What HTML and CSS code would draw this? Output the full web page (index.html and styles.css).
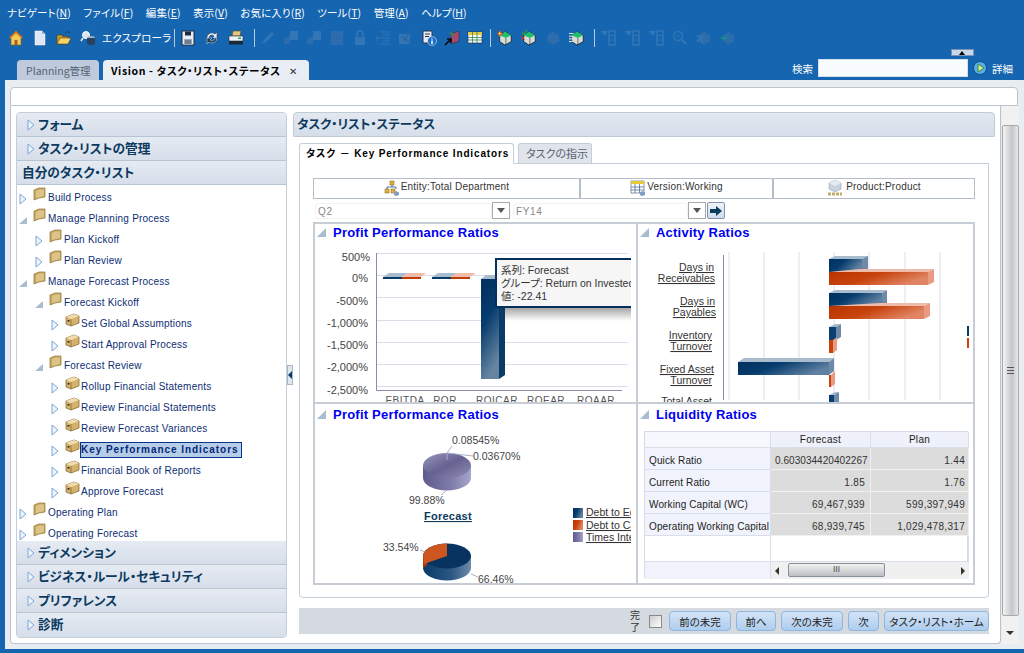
FILE: index.html
```html
<!DOCTYPE html>
<html lang="ja">
<head>
<meta charset="utf-8">
<title>Vision - タスク・リスト・ステータス</title>
<link rel="stylesheet" href="styles.css">
</head>
<body>
<svg class="defs" width="0" height="0" aria-hidden="true">
  <defs>
    <linearGradient id="gBlue" x1="0" y1="0" x2=".3" y2="1"><stop offset="0" stop-color="#00305e"/><stop offset=".45" stop-color="#063c6e"/><stop offset="1" stop-color="#64849f"/></linearGradient>
    <linearGradient id="gBlueH" x1="0" y1="0" x2="1" y2=".4"><stop offset="0" stop-color="#00305e"/><stop offset=".45" stop-color="#063c6e"/><stop offset="1" stop-color="#5f80a0"/></linearGradient>
    <linearGradient id="gRed" x1="0" y1="0" x2="1" y2=".4"><stop offset="0" stop-color="#b83400"/><stop offset=".5" stop-color="#c8440e"/><stop offset="1" stop-color="#e08464"/></linearGradient>
    <linearGradient id="gPie" x1="0" y1="0" x2="1" y2="1"><stop offset="0" stop-color="#9a98c4"/><stop offset=".5" stop-color="#66628f"/><stop offset="1" stop-color="#8f8db8"/></linearGradient>
    <linearGradient id="gPieS" x1="0" y1="0" x2="1" y2="0"><stop offset="0" stop-color="#5e5a8a"/><stop offset=".6" stop-color="#807eaa"/><stop offset="1" stop-color="#a8a6cc"/></linearGradient>
    <linearGradient id="gPieB" x1="0" y1="0" x2="1" y2="0"><stop offset="0" stop-color="#0a3a6a"/><stop offset=".6" stop-color="#2d5885"/><stop offset="1" stop-color="#6f8cab"/></linearGradient>
    <linearGradient id="gShade" x1="0" y1="0" x2="0" y2="1"><stop offset="0" stop-color="#a0a0a0"/><stop offset="1" stop-color="#fff"/></linearGradient>
    <symbol id="i-folder" viewBox="0 0 13 14"><path d="M1 3 L6 1 L12 1 L12 10 L6 11 L1 13Z" fill="#c9a860" stroke="#8f7434" stroke-width=".7"/><path d="M3 4 L7 2.5 L11 2.5 L11 9 L3 11Z" fill="#dcc488"/></symbol>
    <symbol id="i-box" viewBox="0 0 15 14"><path d="M1 4 L9 1 L14 3 L14 10 L6 13 L1 11Z" fill="#d4b26c" stroke="#7c6228" stroke-width=".7"/><path d="M1 4 L6 6 L14 3 L9 1Z" fill="#f0dcae"/><path d="M6 6 V13" stroke="#7c6228" stroke-width=".7"/><rect x="2.5" y="7" width="2" height="1.6" fill="#3a2c10"/></symbol>
    <symbol id="i-right" viewBox="0 0 8 12"><path d="M1 1 L7 6 L1 11Z" fill="#eef4fb" stroke="#7ba6d6"/></symbol>
    <symbol id="i-down" viewBox="0 0 8 12"><path d="M8 3 V10 H0Z" fill="#a9bcd2"/></symbol>
    <symbol id="i-cube" viewBox="0 0 18 18"><path d="M9 2 L16 6 L16 13 L9 17 L3 13 L3 6Z" fill="#d8dcd8" stroke="#111" stroke-width=".8"/><path d="M9 2 L16 6 L10 9 L3 6Z" fill="#1fbf6a"/><path d="M10 9 V17" stroke="#111" stroke-width=".6"/></symbol>
    <symbol id="i-dis" viewBox="0 0 16 16"><rect x="7" y="1" width="8" height="9" fill="#3276b6"/><path d="M1 9 L7 6 V14 H1Z" fill="#2d6dae"/></symbol>
    <symbol id="i-disv" viewBox="0 0 16 16"><path d="M1 1 H8 L4.500 6Z" fill="#3276b6"/><rect x="9" y="1" width="6" height="14" fill="none" stroke="#3276b6" stroke-width="1.500"/><path d="M9 5.500 H15 M9 10 H15" stroke="#3276b6"/></symbol>
  </defs>
</svg>

<div class="app">
  <nav class="menu">
    <span>ナビゲート(<u>N</u>)</span><span>ファイル(<u>F</u>)</span><span>編集(<u>E</u>)</span><span>表示(<u>V</u>)</span><span>お気に入り(<u>R</u>)</span><span>ツール(<u>T</u>)</span><span>管理(<u>A</u>)</span><span>ヘルプ(<u>H</u>)</span>
  </nav>

  <div class="toolbar">
    <svg class="tool" viewBox="0 0 16 16"><path d="M8 1 L15 8 H13 V15 H3 V8 H1Z" fill="#f2c85a" stroke="#8a5a10" stroke-width=".6"/><path d="M8 1 L15 8 L13 8 L8 3.500 L3 8 L1 8Z" fill="#e07818"/><rect x="6.500" y="10" width="3" height="5" fill="#a4661c"/></svg>
    <svg class="tool" viewBox="0 0 16 16"><path d="M3 1 H10 L13 4 V15 H3Z" fill="#dfe5f5" stroke="#fff" stroke-width=".5"/><path d="M10 1 V4 H13Z" fill="#9aa8c8"/></svg>
    <svg class="tool" viewBox="0 0 16 16"><path d="M1 5 H6 L7 6.500 H12 V14 H1Z" fill="#c99a2c" stroke="#5c3f08" stroke-width=".6"/><path d="M1 14 L4 8 H15 L12 14Z" fill="#f6d469" stroke="#5c3f08" stroke-width=".6"/><path d="M9 3 Q12 0 14 3" fill="none" stroke="#20406a"/></svg>
    <svg class="tool" viewBox="0 0 16 16"><circle cx="6" cy="5" r="3.500" fill="#d9e4f2" stroke="#f4f8fc"/><path d="M3 8 L1 11" stroke="#eee" stroke-width="1.500"/><ellipse cx="11" cy="8" rx="4" ry="2" fill="#9fb1c4"/><path d="M7 8 V13 A4 2 0 0 0 15 13 V8Z" fill="#26425e"/></svg>
    <span class="toollabel">エクスプローラ</span>
    <i class="sep"></i>
    <svg class="tool" viewBox="0 0 16 16"><path d="M2 1 H14 V15 H2Z" fill="#e8edf5" stroke="#1d2b3d"/><rect x="5" y="1.500" width="6" height="4" fill="#1d2b3d"/><rect x="4" y="9" width="8" height="6" fill="#9aa9bb"/><path d="M5 11 H11 M5 13 H11" stroke="#1d2b3d" stroke-width=".7"/></svg>
    <svg class="tool" viewBox="0 0 16 16"><path d="M3 9 A5 5 0 0 1 11 4 L13 2 V8 H8 L10 6 A3 3 0 0 0 5 9Z" fill="#e6edf5" stroke="#1d2b3d" stroke-width=".5"/><path d="M13 8 A5 5 0 0 1 5 12 L3 14 V8 H8 L6 10 A3 3 0 0 0 11 8Z" fill="#24384f" stroke="#dfe6ee" stroke-width=".5"/></svg>
    <svg class="tool" viewBox="0 0 16 16"><path d="M5 1 H13 L12 6 H4Z" fill="#e6c77c" stroke="#5c4a20" stroke-width=".6"/><rect x="1" y="6" width="14" height="5" fill="#eef2f6" stroke="#20303f" stroke-width=".6"/><rect x="1" y="11" width="14" height="3.500" fill="#18283a"/><rect x="10" y="7.500" width="3" height="1.500" fill="#2aa850"/></svg>
    <i class="sep wide"></i>
    <svg class="tool t23" viewBox="0 0 16 16"><path d="M2 14 L4 10 L12 2 L14 4 L6 12Z" fill="#3276b6"/></svg>
    <svg class="tool t23"><use href="#i-dis"/></svg>
    <svg class="tool t23"><use href="#i-dis"/></svg>
    <svg class="tool t23" viewBox="0 0 16 16"><rect x="2" y="1" width="12" height="14" fill="#2d6dae"/><path d="M4 6 H12 M4 9 H12" stroke="#2a66a6"/></svg>
    <svg class="tool t23" viewBox="0 0 16 16"><rect x="3" y="7" width="10" height="8" fill="#3276b6"/><path d="M5 7 V4 A3 3 0 0 1 11 4 V7" fill="none" stroke="#3276b6" stroke-width="1.500"/></svg>
    <svg class="tool t23" viewBox="0 0 16 16"><path d="M5 2 H15 M8 5 H15 M5 8 H15 M8 11 H15 M5 14 H15" stroke="#3276b6"/><path d="M1 5 L5 8 L1 11Z" fill="#2d6dae"/></svg>
    <svg class="tool t23" viewBox="0 0 16 16"><rect x="1" y="4" width="11" height="10" fill="#3276b6"/><path d="M3 6 L13 13 M13 1 L5 11" stroke="#2a66a6" stroke-width="1.500"/></svg>
    <svg class="tool t23" viewBox="0 0 16 16"><path d="M2 1 H11 V13 H2Z" fill="#e6eaf5" stroke="#26324a"/><path d="M4 4 H9 M4 6.500 H8" stroke="#26324a"/><circle cx="11" cy="11" r="4.500" fill="#1a6ec8" stroke="#fff" stroke-width=".5"/><path d="M11 8.500 V9.500 M11 10.500 V14" stroke="#fff" stroke-width="1.500"/></svg>
    <svg class="tool t23" viewBox="0 0 16 16"><path d="M7 4 L15 1 V11 L7 14Z" fill="#a04a6c" stroke="#401828" stroke-width=".5"/><path d="M6 2 L11 4 L7 6Z" fill="#3d8a3c"/><path d="M1 15 L7 9 M3 9 H7 V13" fill="none" stroke="#0a0a0a" stroke-width="1.600"/></svg>
    <svg class="tool t23" viewBox="0 0 16 16"><rect x="1" y="2" width="14" height="11" fill="#f2f4f8" stroke="#1f2d40" stroke-width=".6"/><rect x="1" y="2" width="14" height="3" fill="#e4c84a"/><path d="M1 7.500 H15 M1 10 H15 M5.500 2 V13 M10 2 V13" stroke="#2a7a40" stroke-width=".7"/></svg>
    <i class="sep tight"></i>
    <svg class="tool" viewBox="0 0 18 18"><use href="#i-cube" width="18" height="18"/><path d="M3 0 L4 3 L7 4 L4 5 L3 8 L2 5 L0 4 L2 3Z" fill="#ffd23c" stroke="#c8281c" stroke-width=".7"/></svg>
    <svg class="tool" viewBox="0 0 18 18"><use href="#i-cube" width="18" height="18"/><path d="M1 3 L3 5 L7 0" fill="none" stroke="#2ca83c" stroke-width="1.200"/><path d="M0 7 L4 11 M4 7 L0 11" stroke="#e0301c"/></svg>
    <svg class="tool" viewBox="0 0 18 18"><path d="M9 2 L16 6 V13 L9 17 L3 13 V6Z" fill="#2d6dae"/></svg>
    <svg class="tool" viewBox="0 0 18 18"><use href="#i-cube" width="18" height="18"/><path d="M0 4 H5 M0 7 H4 M0 10 H4 M0 13 H4" stroke="#fff"/></svg>
    <i class="sep sep2"></i>
    <svg class="tool"><use href="#i-disv"/></svg>
    <svg class="tool"><use href="#i-disv"/></svg>
    <svg class="tool"><use href="#i-disv"/></svg>
    <svg class="tool" viewBox="0 0 16 16"><circle cx="6" cy="6" r="4.500" fill="none" stroke="#3276b6" stroke-width="1.500"/><path d="M9 9 L14 14" stroke="#3276b6" stroke-width="2"/><path d="M4 6 H8" stroke="#3276b6"/></svg>
    <svg class="tool" viewBox="0 0 18 18"><path d="M9 2 L16 6 V13 L9 17 L3 13 V6Z" fill="#2d6dae"/><path d="M1 6 L8 13 M8 6 L1 13" stroke="#3276b6" stroke-width="2"/></svg>
    <svg class="tool" viewBox="0 0 18 18"><path d="M9 2 L16 6 V13 L9 17 L5 13 V6Z" fill="#2d6dae"/><path d="M1 9 H8 M4.500 6 V12" stroke="#1f8a8a" stroke-width="2"/></svg>
  </div>

  <div class="tabrow">
    <div class="doc-tab off">Planning管理</div>
    <div class="doc-tab on">Vision - タスク・リスト・ステータス<span class="close">✕</span></div>
    <div class="search">
      <button class="collapse" aria-label="折りたたむ"></button>
      <span>検索</span>
      <input class="search-input" type="text" aria-label="検索">
      <svg class="go" viewBox="0 0 14 14"><circle cx="7" cy="7" r="6.500" fill="#58b0ea" stroke="#0c4a8c"/><path d="M5 3 L11 7 L5 11Z" fill="#d6ec9c" stroke="#3f8a2a"/></svg>
      <span>詳細</span>
    </div>
  </div>

  <div class="content">
    <div class="topbox"></div>
    <div class="workrow">
      <div class="mainbox">
        <aside class="left">
          <div class="acc"><svg class="acc-arrow"><use href="#i-right"/></svg>フォーム</div>
          <div class="acc"><svg class="acc-arrow"><use href="#i-right"/></svg>タスク・リストの管理</div>
          <div class="acc open">自分のタスク・リスト</div>
          <div class="tree">
            <div class="row l0"><svg class="tw"><use href="#i-right"/></svg><svg class="fo"><use href="#i-folder"/></svg><span>Build Process</span></div>
            <div class="row l0"><svg class="tw"><use href="#i-down"/></svg><svg class="fo"><use href="#i-folder"/></svg><span>Manage Planning Process</span></div>
            <div class="row l1"><svg class="tw"><use href="#i-right"/></svg><svg class="fo"><use href="#i-folder"/></svg><span>Plan Kickoff</span></div>
            <div class="row l1"><svg class="tw"><use href="#i-right"/></svg><svg class="fo"><use href="#i-folder"/></svg><span>Plan Review</span></div>
            <div class="row l0"><svg class="tw"><use href="#i-down"/></svg><svg class="fo"><use href="#i-folder"/></svg><span>Manage Forecast Process</span></div>
            <div class="row l1"><svg class="tw"><use href="#i-down"/></svg><svg class="fo"><use href="#i-folder"/></svg><span>Forecast Kickoff</span></div>
            <div class="row l2"><svg class="tw"><use href="#i-right"/></svg><svg class="bx"><use href="#i-box"/></svg><span>Set Global Assumptions</span></div>
            <div class="row l2"><svg class="tw"><use href="#i-right"/></svg><svg class="bx"><use href="#i-box"/></svg><span>Start Approval Process</span></div>
            <div class="row l1"><svg class="tw"><use href="#i-down"/></svg><svg class="fo"><use href="#i-folder"/></svg><span>Forecast Review</span></div>
            <div class="row l2"><svg class="tw"><use href="#i-right"/></svg><svg class="bx"><use href="#i-box"/></svg><span>Rollup Financial Statements</span></div>
            <div class="row l2"><svg class="tw"><use href="#i-right"/></svg><svg class="bx"><use href="#i-box"/></svg><span>Review Financial Statements</span></div>
            <div class="row l2"><svg class="tw"><use href="#i-right"/></svg><svg class="bx"><use href="#i-box"/></svg><span>Review Forecast Variances</span></div>
            <div class="row l2"><svg class="tw"><use href="#i-right"/></svg><svg class="bx"><use href="#i-box"/></svg><span class="sel">Key Performance Indicators</span></div>
            <div class="row l2"><svg class="tw"><use href="#i-right"/></svg><svg class="bx"><use href="#i-box"/></svg><span>Financial Book of Reports</span></div>
            <div class="row l2"><svg class="tw"><use href="#i-right"/></svg><svg class="bx"><use href="#i-box"/></svg><span>Approve Forecast</span></div>
            <div class="row l0"><svg class="tw"><use href="#i-right"/></svg><svg class="fo"><use href="#i-folder"/></svg><span>Operating Plan</span></div>
            <div class="row l0"><svg class="tw"><use href="#i-right"/></svg><svg class="fo"><use href="#i-folder"/></svg><span>Operating Forecast</span></div>
          </div>
          <div class="acc"><svg class="acc-arrow"><use href="#i-right"/></svg>ディメンション</div>
          <div class="acc"><svg class="acc-arrow"><use href="#i-right"/></svg>ビジネス・ルール・セキュリティ</div>
          <div class="acc"><svg class="acc-arrow"><use href="#i-right"/></svg>プリファレンス</div>
          <div class="acc"><svg class="acc-arrow"><use href="#i-right"/></svg>診断</div>
        </aside>

        <div class="splitter"><i class="grip"></i></div>

        <section class="right">
          <div class="right-head">タスク・リスト・ステータス</div>
          <div class="subtabs">
            <div class="subtab on">タスク － Key Performance Indicators</div>
            <div class="subtab off">タスクの指示</div>
          </div>
          <div class="tabbody">
            <div class="pov">
              <div class="pov-cell c1">
                <svg class="pov-i" viewBox="0 0 16 16"><rect x="6" y="1" width="4" height="4" fill="#e0b040" stroke="#806010" stroke-width=".5"/><rect x="1" y="9" width="4" height="4" fill="#e0b040" stroke="#806010" stroke-width=".5"/><rect x="7" y="9" width="4" height="4" fill="#e0b040" stroke="#806010" stroke-width=".5"/><path d="M8 5 V7 M3 9 V7 H12 V9" fill="none" stroke="#305080" stroke-width=".8"/><path d="M12 11 L15 12.500 V15 L12 16 L10 15 V12.500Z" fill="#7f9cc4"/></svg>
                Entity:Total Department</div>
              <div class="pov-cell c2">
                <svg class="pov-i" viewBox="0 0 16 16"><rect x="1" y="1" width="13" height="12" fill="#fff" stroke="#45566e" stroke-width=".6"/><rect x="1" y="1" width="13" height="3" fill="#e6c83c"/><path d="M1 7 H14 M1 10 H14 M5 4 V13 M9.500 4 V13" stroke="#3c5c90" stroke-width=".7"/><path d="M12 11 L15 12.500 V15 L12 16 L10 15 V12.500Z" fill="#7f9cc4"/></svg>
                Version:Working</div>
              <div class="pov-cell c3">
                <svg class="pov-i tall" viewBox="0 0 16 18"><path d="M8 1 L14 4 V10 L8 13 L2 10 V4Z" fill="#c8d2dc" stroke="#8a98a8" stroke-width=".5"/><path d="M8 1 L14 4 L8 7 L2 4Z" fill="#e4eaf0"/><path d="M1 15 H15" stroke="#c2ac6c" stroke-width="3" stroke-dasharray="3 1"/></svg>
                Product:Product</div>
            </div>
            <div class="selectors">
              <div class="fake-input w1">Q2</div><button class="drop" aria-label="開く"></button>
              <div class="fake-input w2">FY14</div><button class="drop" aria-label="開く"></button>
              <button class="arrowbtn" aria-label="移動">
                <svg viewBox="0 0 12 10" width="12" height="10"><path d="M0 3 H6 V0 L12 5 L6 10 V7 H0Z" fill="#0a3c5a"/></svg>
              </button>
            </div>

            <div class="dash">
              <div class="panel">
                <h3 class="p-title"><i class="corner"></i>Profit Performance Ratios</h3>
                <svg class="chart" width="316" height="159" viewBox="315 243 316 159">
                  <g class="grid"><path d="M377 253.500 H628 M377 275.500 H628 M377 297.500 H628 M377 320.500 H628 M377 342.500 H628 M377 364.500 H628 M377 386.500 H628"/></g>
                  <path class="axis" d="M376.500 253 V390.500 H622"/>
                  <g class="ax" text-anchor="end">
                    <text x="370" y="261">500%</text><text x="368" y="282">0%</text><text x="368" y="305">-500%</text><text x="368" y="327">-1,000%</text><text x="368" y="349">-1,500%</text><text x="368" y="371">-2,000%</text><text x="368" y="394">-2,500%</text>
                  </g>
                  <path d="M383 277 L389 273 H408 L402 277Z" fill="#a9bccd"/><rect x="383" y="277" width="19" height="2" fill="#063a6c"/>
                  <path d="M402 277 L408 273 H426 L421 277Z" fill="#eebcaa"/><rect x="402" y="277" width="19" height="2" fill="#c23c08"/>
                  <path d="M432 277 L438 273 H457 L451 277Z" fill="#a9bccd"/><rect x="432" y="277" width="19" height="2" fill="#063a6c"/>
                  <path d="M451 277 L457 273 H476 L470 277Z" fill="#eebcaa"/><rect x="451" y="277" width="19" height="2" fill="#c23c08"/>
                  <path d="M481 279 L486 275 H505 L499 279Z" fill="#a9bccd"/>
                  <rect x="481" y="279" width="18" height="100" fill="url(#gBlue)"/>
                  <path d="M499 279 L505 275 V375 L499 379Z" fill="#0a3a68"/>
                  <g class="xl"><text x="405" y="404" text-anchor="middle">EBITDA</text><text x="445" y="404" text-anchor="middle">ROR</text><text x="497" y="404" text-anchor="middle">ROICAR</text><text x="546" y="404" text-anchor="middle">ROEAR</text><text x="596" y="404" text-anchor="middle">ROAAR</text></g>
                  <rect x="505" y="307" width="126" height="14" fill="url(#gShade)"/>
                  <rect x="496" y="259" width="140" height="48" fill="#f6f6f6" stroke="#04305c" stroke-width="2"/>
                  <g class="tip"><text x="501" y="274">系列: Forecast</text><text x="501" y="287">グループ: Return on Invested Capital</text><text x="501" y="300">値: -22.41</text></g>
                </svg>
              </div>

              <div class="panel">
                <h3 class="p-title"><i class="corner"></i>Activity Ratios</h3>
                <svg class="chart" width="335" height="159" viewBox="638 243 335 159">
                  <g class="grid"><path d="M729 252 V400 M764 252 V400 M799 252 V400 M834 252 V400 M869 252 V400 M905 252 V400 M940 252 V400"/></g>
                  <path class="axis" d="M723.500 255 V400"/>
                  <g class="lab" text-anchor="end">
                    <text x="714" y="271">Days in</text><text x="715" y="282">Receivables</text>
                    <text x="715" y="305">Days in</text><text x="716" y="316">Payables</text>
                    <text x="712" y="339">Inventory</text><text x="712" y="350">Turnover</text>
                    <text x="714" y="373">Fixed Asset</text><text x="712" y="384">Turnover</text>
                    <text x="712" y="405">Total Asset</text>
                  </g>
                  <path d="M829 259 L835 256 H868 L862 259Z" fill="#a9bccd"/><rect x="829" y="259" width="33" height="13" fill="url(#gBlueH)"/><path d="M862 259 L868 256 V269 L862 272Z" fill="#6d8aa8"/>
                  <path d="M829 272 L860 269 H934 L928 272Z" fill="#eebcaa"/><rect x="829" y="272" width="99" height="13" fill="url(#gRed)"/><path d="M928 272 L934 269 V282 L928 285Z" fill="#ea9a80"/>
                  <path d="M829 293 L835 290 H887 L882 293Z" fill="#a9bccd"/><rect x="829" y="293" width="53" height="13" fill="url(#gBlueH)"/><path d="M882 293 L887 290 V303 L882 306Z" fill="#6d8aa8"/>
                  <path d="M829 306 L880 303 H930 L924 306Z" fill="#eebcaa"/><rect x="829" y="306" width="95" height="13" fill="url(#gRed)"/><path d="M924 306 L930 303 V316 L924 319Z" fill="#ea9a80"/>
                  <path d="M829 327 L835 324 H841 L836 327Z" fill="#a9bccd"/><rect x="829" y="327" width="7" height="13" fill="#0c3f70"/><path d="M836 327 L841 324 V337 L836 340Z" fill="#6d8aa8"/>
                  <rect x="829" y="340" width="4" height="13" fill="#c8440e"/><path d="M833 340 L837 337 V350 L833 353Z" fill="#ea9a80"/>
                  <path d="M738 362 L744 358 H834 L829 362Z" fill="#a9bccd"/><rect x="738" y="362" width="91" height="13" fill="url(#gBlueH)"/><path d="M829 362 L834 358 V371 L829 375Z" fill="#6d8aa8"/>
                  <rect x="829" y="375" width="2" height="12" fill="#c8440e"/><path d="M831 375 L835 371 V384 L831 387Z" fill="#ea9a80"/>
                  <path d="M829 395 L835 392 H839 L834 395Z" fill="#a9bccd"/><rect x="829" y="395" width="5" height="8" fill="#0c3f70"/><path d="M834 395 L839 392 V402 H834Z" fill="#6d8aa8"/>
                  <rect x="967" y="326" width="2" height="10" fill="#0a3a6a"/><rect x="967" y="338" width="2" height="10" fill="#c8440e"/>
                </svg>
              </div>

              <div class="panel">
                <h3 class="p-title low"><i class="corner"></i>Profit Performance Ratios</h3>
                <svg class="chart" width="316" height="160" viewBox="315 423 316 160">
                  <path d="M423 466 V478 A24 12.500 0 0 0 471 478 V466Z" fill="url(#gPieS)"/>
                  <ellipse cx="447" cy="465.500" rx="24" ry="12.500" fill="url(#gPie)"/>
                  <path d="M447 460 V453 L452 446 M447 453 L473 456 M447 490 L441 495" fill="none" stroke="#aab0c8"/>
                  <g class="ax2"><text x="452" y="444">0.08545%</text><text x="473" y="460">0.03670%</text><text x="409" y="504">99.88%</text><text x="383" y="551">33.54%</text><text x="478" y="583">66.46%</text></g>
                  <text class="fc" x="424" y="520">Forecast</text>
                  <path d="M423 556 V568 A24 12.500 0 0 0 471 568 V556Z" fill="url(#gPieB)"/>
                  <path d="M423 556 V568 L427 565 V553Z" fill="#b03808"/>
                  <ellipse cx="447" cy="556" rx="24" ry="12.500" fill="#06335f"/>
                  <path d="M447 556 V543.500 A24 12.500 0 0 0 423 556 L424 564Z" fill="#cc5520"/>
                  <path d="M420 550 L425 552 M471 574 L478 577" stroke="#aab0c8"/>
                  <rect x="573" y="508" width="10" height="10" fill="url(#gBlueH)"/><rect x="573" y="520" width="10" height="10" fill="url(#gRed)"/><rect x="573" y="532" width="10" height="10" fill="url(#gPieS)"/>
                  <g class="lab"><text x="586" y="516">Debt to Equity</text><text x="586" y="529">Debt to Capital</text><text x="586" y="541">Times Interest Earned</text></g>
                </svg>
              </div>

              <div class="panel">
                <h3 class="p-title low"><i class="corner"></i>Liquidity Ratios</h3>
                <div class="grid-table">
                  <div class="th blank"></div><div class="th">Forecast</div><div class="th">Plan</div>
                  <div class="rh">Quick Ratio</div><div class="td long">0.603034420402267</div><div class="td">1.44</div>
                  <div class="rh">Current Ratio</div><div class="td">1.85</div><div class="td">1.76</div>
                  <div class="rh">Working Capital (WC)</div><div class="td">69,467,939</div><div class="td">599,397,949</div>
                  <div class="rh">Operating Working Capital</div><div class="td">68,939,745</div><div class="td">1,029,478,317</div>
                  <div class="empty"></div><div class="empty wide"></div>
                  <div class="sb-corner"></div>
                  <div class="hscroll"><i class="ha l"></i><i class="thumb">Ⅲ</i><i class="ha r"></i></div>
                </div>
              </div>
            </div>
          </div>

          <div class="footbar">
            <span class="done">完<br>了</span><i class="check"></i>
            <button class="btn">前の未完</button><button class="btn">前へ</button><button class="btn">次の未完</button><button class="btn">次</button><button class="btn">タスク・リスト・ホーム</button>
          </div>
        </section>
      </div>
      <div class="vscroll"><i class="va up"></i><i class="vthumb"><b></b></i><i class="va dn"></i></div>
    </div>
  </div>
</div>
</body>
</html>
```

FILE: styles.css
```css
* { box-sizing: border-box; }
html, body { margin: 0; height: 653px; overflow: hidden; }
body { background: #1565b0; font-family: "Liberation Sans", "Noto Sans CJK JP", sans-serif; font-size: 11px; }
.defs { position: absolute; }
.app { height: 653px; display: flex; flex-direction: column; font-feature-settings: "palt"; }

.menu { height: 24px; flex: none; display: flex; gap: 12.400px; align-items: center; padding-left: 7px; color: #fff; font: 10.500px "Noto Sans CJK JP", sans-serif; font-feature-settings: "palt"; letter-spacing: .12px; }

.toolbar { height: 26px; flex: none; display: flex; align-items: center; padding: 1px 0 0 8px; }
.tool { width: 16px; height: 16px; margin-right: 8px; flex: none; overflow: visible; }
.tool.t23 { margin-right: 7px; }
.toollabel { color: #fff; font: 10.500px "Noto Sans CJK JP", sans-serif; font-feature-settings: "palt"; margin-left: -2px; width: 72px; white-space: nowrap; letter-spacing: .2px; }
.sep { width: 1px; height: 18px; background: #b6c8dc; margin: 0 5px 0 0; flex: none; }
.sep.wide { margin: 0 5px 0 2px; }
.sep.tight { margin: 0 6px 0 0; }
.sep.sep2 { margin: 0 5px 0 1px; }

.tabrow { height: 30px; flex: none; display: flex; align-items: flex-end; padding-left: 17px; gap: 4px; position: relative; }
.doc-tab { height: 20px; border-radius: 4px 4px 0 0; display: flex; align-items: center; font: 10.500px "Noto Sans CJK JP", "Liberation Sans", sans-serif; font-feature-settings: "palt"; }
.doc-tab.off { width: 82px; background: #bfcbdc; color: #556270; padding-left: 9px; }
.doc-tab.on { width: 206px; background: #e9eef4; color: #000; font-weight: 700; padding-left: 8px; white-space: nowrap; letter-spacing: .62px; }
.close { font-weight: 400; margin-left: 8px; font-size: 10px; color: #333; }
.search { margin-left: auto; display: flex; align-items: center; gap: 5px; height: 18px; margin-bottom: 3px; padding-right: 11px; color: #fff; font: 10.500px "Noto Sans CJK JP", sans-serif; }
.search-input { width: 150px; height: 18px; border: 1px solid #d5e0ec; background: #f8fcff; padding: 0; }
.go { width: 14px; height: 14px; }
.collapse { position: absolute; right: 50px; top: -1px; width: 23px; height: 7px; padding: 0; border: 1px solid #7a93b8; background: #c9d7ea; }
.collapse::after { content: ""; position: absolute; left: 7px; top: 1px; border: 3.500px solid transparent; border-top: 0; border-bottom: 4px solid #000; }

.content { flex: 1; min-height: 0; margin: 0 0 4px 5px; background: #e8edf2; padding: 7px 6px 5px 5px; display: flex; flex-direction: column; }
.topbox { height: 19px; flex: none; background: #fff; border: 1px solid #b9c4cf; border-radius: 4px 4px 0 0; }
.workrow { flex: 1; display: flex; gap: 1px; min-height: 0; }
.mainbox { width: 991px; display: flex; background: #fff; border: 1px solid #b9c4cf; border-top-width: 0; border-radius: 0 0 4px 4px; padding: 6px 5px 5px; }

.left { width: 271px; flex: none; display: flex; flex-direction: column; border: 1px solid #c4ced9; border-radius: 4px; overflow: hidden; }
.acc { height: 24px; flex: none; display: flex; align-items: center; padding: 0 0 3px 10px; background: linear-gradient(#e6ebf3, #d6deea); border-bottom: 1px solid #b8c4d2; color: #0b3a5e; font: 700 12.700px "Noto Sans CJK JP", sans-serif; font-feature-settings: "palt"; }
.acc:last-child { border-bottom: 0; }
.acc.open { padding-left: 5px; }
.acc-arrow { width: 8px; height: 12px; margin: 3px 3px 0 0; }
.tree { height: 356px; overflow: hidden; padding-top: 2px; }
.row { height: 21px; display: flex; align-items: flex-start; color: #0d2d73; font-size: 10px; letter-spacing: .22px; white-space: nowrap; }
.row span { margin-top: 5px; line-height: 12px; }
.row.l0 { padding-left: 2px; }
.row.l1 { padding-left: 18px; }
.row.l2 { padding-left: 34px; }
.tw { width: 8px; height: 12px; margin: 6px 6px 0 0; flex: none; }
.fo { width: 13px; height: 14px; margin-right: 2px; flex: none; }
.bx { width: 15px; height: 14px; margin-right: 1px; flex: none; }
.row span.sel { margin-top: 3px; margin-left: -1px; padding: 1px 2px 0 0; height: 16px; background: #b7cce6; border: 1px solid #06348a; font-weight: 700; color: #00297a; letter-spacing: .95px; }

.splitter { width: 6px; flex: none; position: relative; }
.grip { position: absolute; left: 0; top: 253px; width: 6px; height: 20px; background: #dfe6ee; border: 1px solid #a8b6c6; }
.grip::after { content: ""; position: absolute; left: 0; top: 5px; border: 4px solid transparent; border-left: 0; border-right: 4px solid #0b3a6a; }

.right { width: 702px; flex: none; display: flex; flex-direction: column; }
.right-head { height: 25px; flex: none; display: flex; align-items: center; padding: 0 0 3px 3px; background: linear-gradient(#e2e8f0, #d6deea); border: 1px solid #c0cad6; border-radius: 4px 4px 0 0; color: #0b3a5e; font: 700 12.500px "Noto Sans CJK JP", sans-serif; font-feature-settings: "palt"; }
.subtabs { height: 26px; flex: none; display: flex; gap: 4px; align-items: flex-end; padding-left: 6px; }
.subtab { height: 20px; display: flex; align-items: center; border: 1px solid #c4ced9; border-radius: 3px 3px 0 0; font-feature-settings: "palt"; font-family: "Liberation Sans", "Noto Sans CJK JP", sans-serif; font-size: 10px; }
.subtab.on { width: 215px; background: #fff; border-bottom-color: #fff; padding: 0 0 3px 6px; font-weight: 700; color: #000; letter-spacing: .85px; position: relative; z-index: 1; margin-bottom: -1px; height: 21px; white-space: nowrap; }
.subtab.off { width: 74px; background: #e0e5ec; color: #58626e; padding: 0 0 2px 7px; border-bottom: 0; font-size: 11px; }
.tabbody { width: 690px; height: 435px; margin-left: 6px; flex: none; border: 1px solid #c4ced9; border-radius: 0 0 4px 4px; padding: 14px 13px 0; }
.pov { height: 21px; display: flex; border: 1px solid #b4bec8; width: 662px; }
.pov-cell { display: flex; align-items: center; justify-content: center; gap: 1px; padding-bottom: 5px; font-size: 10px; letter-spacing: .2px; color: #333; white-space: nowrap; }
.pov-cell.c1 { width: 267px; border-right: 2px solid #b4bec8; }
.pov-cell.c2 { width: 193px; border-right: 2px solid #b4bec8; }
.pov-cell.c3 { flex: 1; gap: 3px; }
.pov-i { width: 16px; height: 16px; margin-bottom: -4px; }
.pov-i.tall { height: 18px; }
.selectors { height: 23px; display: flex; align-items: center; gap: 0; padding-left: 2px; }
.fake-input { height: 16px; color: #888; font-size: 10px; letter-spacing: .6px; line-height: 15px; padding-left: 2px; border: 1px solid #f2f2f2; border-radius: 3px; background: #fff; }
.fake-input.w1 { width: 177px; }
.fake-input.w2 { width: 175px; margin-left: 3px; }
.drop { width: 18px; height: 17px; border: 1px solid #a9a9a9; background: #fff; padding: 0; position: relative; }
.drop::after { content: ""; position: absolute; left: 4px; top: 5px; border: 4px solid transparent; border-bottom: 0; border-top: 5px solid #555; }
.arrowbtn { width: 18px; height: 17px; margin-left: 1px; padding: 0; border: 1px solid #7f93b0; border-radius: 2px; background: linear-gradient(#f0f4fa, #cfdcec); display: flex; align-items: center; justify-content: center; }

.dash { width: 662px; height: 363px; background: #c6cdd4; padding: 2px; display: grid; grid-template-columns: 321px 335px; grid-template-rows: 178px 179px; gap: 2px; }
.panel { background: #fff; overflow: hidden; display: flex; flex-direction: column; }
.p-title { height: 19px; margin: 0; flex: none; display: flex; align-items: center; gap: 7px; padding: 0 0 2px 2px; color: #0000f0; font: 700 13px "Liberation Sans", sans-serif; letter-spacing: .22px; }
.p-title.low { padding: 1px 0 0 2px; }
.corner { width: 0; height: 0; border-style: solid; border-width: 0 0 9px 9px; border-color: transparent transparent #a8bcd2 transparent; }
.chart { display: block; flex: none; }
.chart text { font-family: "Liberation Sans", "Noto Sans CJK JP", sans-serif; }
.grid path { stroke: #dcdce8; fill: none; }
.axis { stroke: #8a8ab0; fill: none; }
.ax text { font-size: 11px; fill: #444; }
.ax2 text { font-size: 10.500px; fill: #444; }
.xl text { font-size: 10px; fill: #555; letter-spacing: .5px; }
.tip text { font-size: 10.500px; fill: #333; }
.lab text { font-size: 10.500px; fill: #333; text-decoration: underline; }
.fc { font-size: 11px; font-weight: 700; fill: #0b3a5e; text-decoration: underline; letter-spacing: .25px; }

.grid-table { margin: 8px 0 0 6px; width: 324px; height: 147px; display: grid; grid-template-columns: 126px 100px 98px; grid-template-rows: 16px repeat(4, 22px) 26px 17px; border: 1px solid #d4dae6; font-size: 10px; letter-spacing: .3px; color: #222; background: #fff; }
.th { background: #eef1fa; display: flex; align-items: center; justify-content: center; border-right: 1px solid #d8deea; border-bottom: 1px solid #d8deea; }
.th.blank { background: #f7f8fd; }
.rh { background: #f0f3fb; display: flex; align-items: center; padding: 4px 0 0 4px; white-space: nowrap; letter-spacing: .12px; border-right: 1px solid #d8deea; border-bottom: 1px solid #d8deea; }
.td { background: #dcdcdc; display: flex; align-items: center; justify-content: flex-end; padding: 4px 3px 0 0; white-space: nowrap; overflow: hidden; color: #333; border-right: 1px solid #f0f0f0; border-bottom: 1px solid #f0f0f0; }
.td:nth-child(3n+2) { padding-right: 5px; }
.td.long { justify-content: flex-start; padding: 4px 0 0 4px; letter-spacing: .05px; }
.empty { border-right: 1px solid #d8deea; border-bottom: 1px solid #d8deea; }
.empty.wide { grid-column: span 2; }
.sb-corner { background: #f0f3fb; border-right: 1px solid #d8deea; }
.hscroll { grid-column: span 2; background: #f0f0f0; display: flex; align-items: center; position: relative; padding: 0 4px; }
.thumb { position: absolute; left: 17px; top: 1px; width: 97px; height: 14px; border: 1px solid #8a8f96; border-radius: 2px; background: linear-gradient(#f2f2f2, #bcbfc4); font-style: normal; font-size: 8px; text-align: center; line-height: 12px; letter-spacing: 0; color: #444; }
.ha { width: 0; height: 0; border: 4px solid transparent; }
.ha.l { border-left: 0; border-right: 4px solid #333; }
.ha.r { border-right: 0; border-left: 4px solid #333; margin-left: auto; }

.footbar { margin: 10px 0 0 6px; width: 690px; height: 26px; flex: none; background: #d5d9e0; display: flex; align-items: center; justify-content: flex-end; gap: 5px; font-family: "Noto Sans CJK JP", sans-serif; font-feature-settings: "palt"; }
.done { font-size: 10px; line-height: 12px; color: #333; margin-right: 4px; }
.check { width: 13px; height: 13px; border: 1px solid #888; background: linear-gradient(135deg, #ccc, #fff); margin: 0 2px 0 0; }
.btn { height: 20px; padding: 0; border: 1px solid #8fb6df; border-radius: 4px; background: linear-gradient(#d3e3f6, #aecdee); font: 10.500px "Noto Sans CJK JP", sans-serif; font-feature-settings: "palt"; color: #222; white-space: nowrap; }
.btn:nth-of-type(1) { width: 62px; }
.btn:nth-of-type(2) { width: 40px; }
.btn:nth-of-type(3) { width: 62px; }
.btn:nth-of-type(4) { width: 31px; }
.btn:nth-of-type(5) { width: 105px; }

.vscroll { width: 17px; flex: none; background: #f1f1f1; display: flex; flex-direction: column; align-items: center; }
.va { height: 19px; flex: none; position: relative; width: 100%; }
.va.dn::after { content: ""; position: absolute; left: 4px; top: 6px; border: 4px solid transparent; border-bottom: 0; border-top: 4px solid #333; }
.vthumb { flex: 1; width: 100%; margin-bottom: 9px; border: 1px solid #a8a8a8; border-radius: 2px; background: linear-gradient(90deg, #f4f4f4, #c4c6ca 60%, #e8e8e8); position: relative; }
.vthumb b { position: absolute; left: 4px; top: 241px; width: 7px; height: 7px; border-top: 1px solid #555; border-bottom: 1px solid #555; }
.vthumb b::after { content: ""; position: absolute; left: 0; right: 0; top: 2px; height: 1px; background: #555; }
```
